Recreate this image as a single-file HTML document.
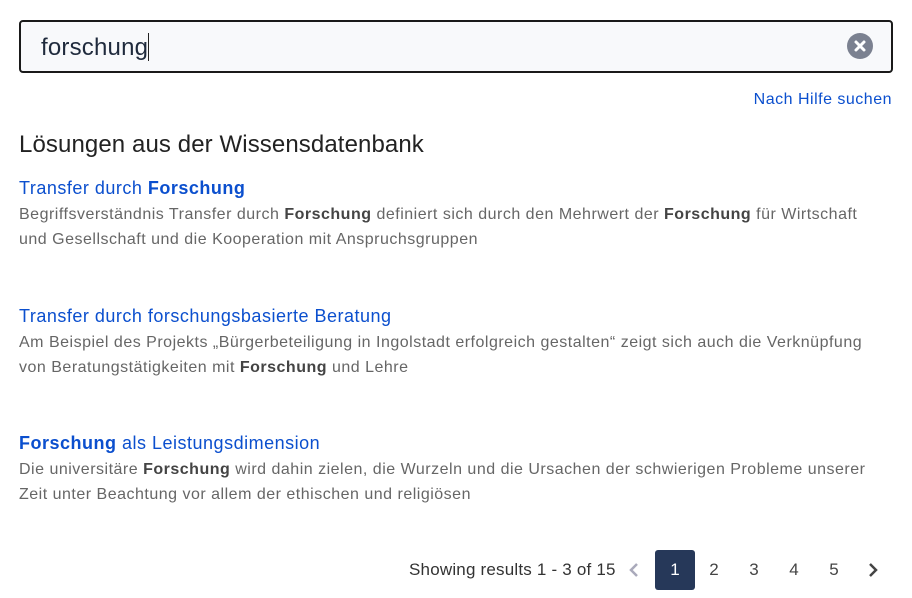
<!DOCTYPE html>
<html><head><meta charset="utf-8"><style>
body{margin:0;width:912px;height:598px;background:#fff;font-family:"Liberation Sans",Arial,sans-serif;position:relative;overflow:hidden}
.box{position:absolute;left:19px;top:20px;width:870px;height:49px;border:2px solid #1a1a1a;border-radius:4px;background:#f8f9fb}
.q{position:absolute;left:20px;top:11px;font-size:24px;color:#1f2a3c;letter-spacing:0.2px}
.q span{display:inline-block;width:1px;height:28px;background:#222;vertical-align:-6px}
.clr{position:absolute;left:826px;top:11px;width:26px;height:26px;border-radius:50%;background:#7b8190}
.help{position:absolute;right:20px;top:91px;font-size:16px;color:#0b4fce;letter-spacing:0.5px}
h2{position:absolute;left:19px;top:131px;margin:0;font-weight:normal;font-size:24px;color:#222;letter-spacing:0.1px}
.r{position:absolute;left:19px;width:890px;white-space:nowrap}
.t{font-size:18px;color:#0b4fce;line-height:24px;letter-spacing:0.5px}
.d{font-size:16px;color:#666;line-height:25px;margin-top:2px;letter-spacing:0.5px}
.d b{color:#444}
.pg{position:absolute;top:550px;height:40px;font-size:17px;color:#444;line-height:40px;letter-spacing:0.2px}
.n{position:absolute;top:550px;width:40px;height:40px;line-height:40px;text-align:center;font-size:17px;color:#444}
</style></head><body>
<div class="box"><div class="q">forschung<span></span></div>
<svg class="clr" viewBox="0 0 26 26"><path d="M9 9L17 17M17 9L9 17" stroke="#fff" stroke-width="3" stroke-linecap="round"/></svg></div>
<div class="help">Nach Hilfe suchen</div>
<h2>Lösungen aus der Wissensdatenbank</h2>
<div class="r" style="top:176px"><div class="t">Transfer durch <b>Forschung</b></div><div class="d">Begriffsverständnis Transfer durch <b>Forschung</b> definiert sich durch den Mehrwert der <b>Forschung</b> für Wirtschaft<br>und Gesellschaft und die Kooperation mit Anspruchsgruppen</div></div>
<div class="r" style="top:304px"><div class="t">Transfer durch forschungsbasierte Beratung</div><div class="d">Am Beispiel des Projekts „Bürgerbeteiligung in Ingolstadt erfolgreich gestalten“ zeigt sich auch die Verknüpfung<br>von Beratungstätigkeiten mit <b>Forschung</b> und Lehre</div></div>
<div class="r" style="top:431px"><div class="t"><b>Forschung</b> als Leistungsdimension</div><div class="d">Die universitäre <b>Forschung</b> wird dahin zielen, die Wurzeln und die Ursachen der schwierigen Probleme unserer<br>Zeit unter Beachtung vor allem der ethischen und religiösen</div></div>
<div class="pg" style="left:409px;color:#333">Showing results 1 - 3 of 15</div>
<svg style="position:absolute;left:628px;top:563px" width="12" height="14"><path d="M9 1L3 7L9 13" stroke="#aab" stroke-width="2.5" fill="none"/></svg>
<div class="n" style="left:655px;background:#263859;color:#fff;border-radius:3px">1</div>
<div class="n" style="left:694px">2</div><div class="n" style="left:734px">3</div><div class="n" style="left:774px">4</div><div class="n" style="left:814px">5</div>
<svg style="position:absolute;left:867px;top:563px" width="12" height="14"><path d="M3 1L9 7L3 13" stroke="#444" stroke-width="2.5" fill="none"/></svg>
</body></html>
